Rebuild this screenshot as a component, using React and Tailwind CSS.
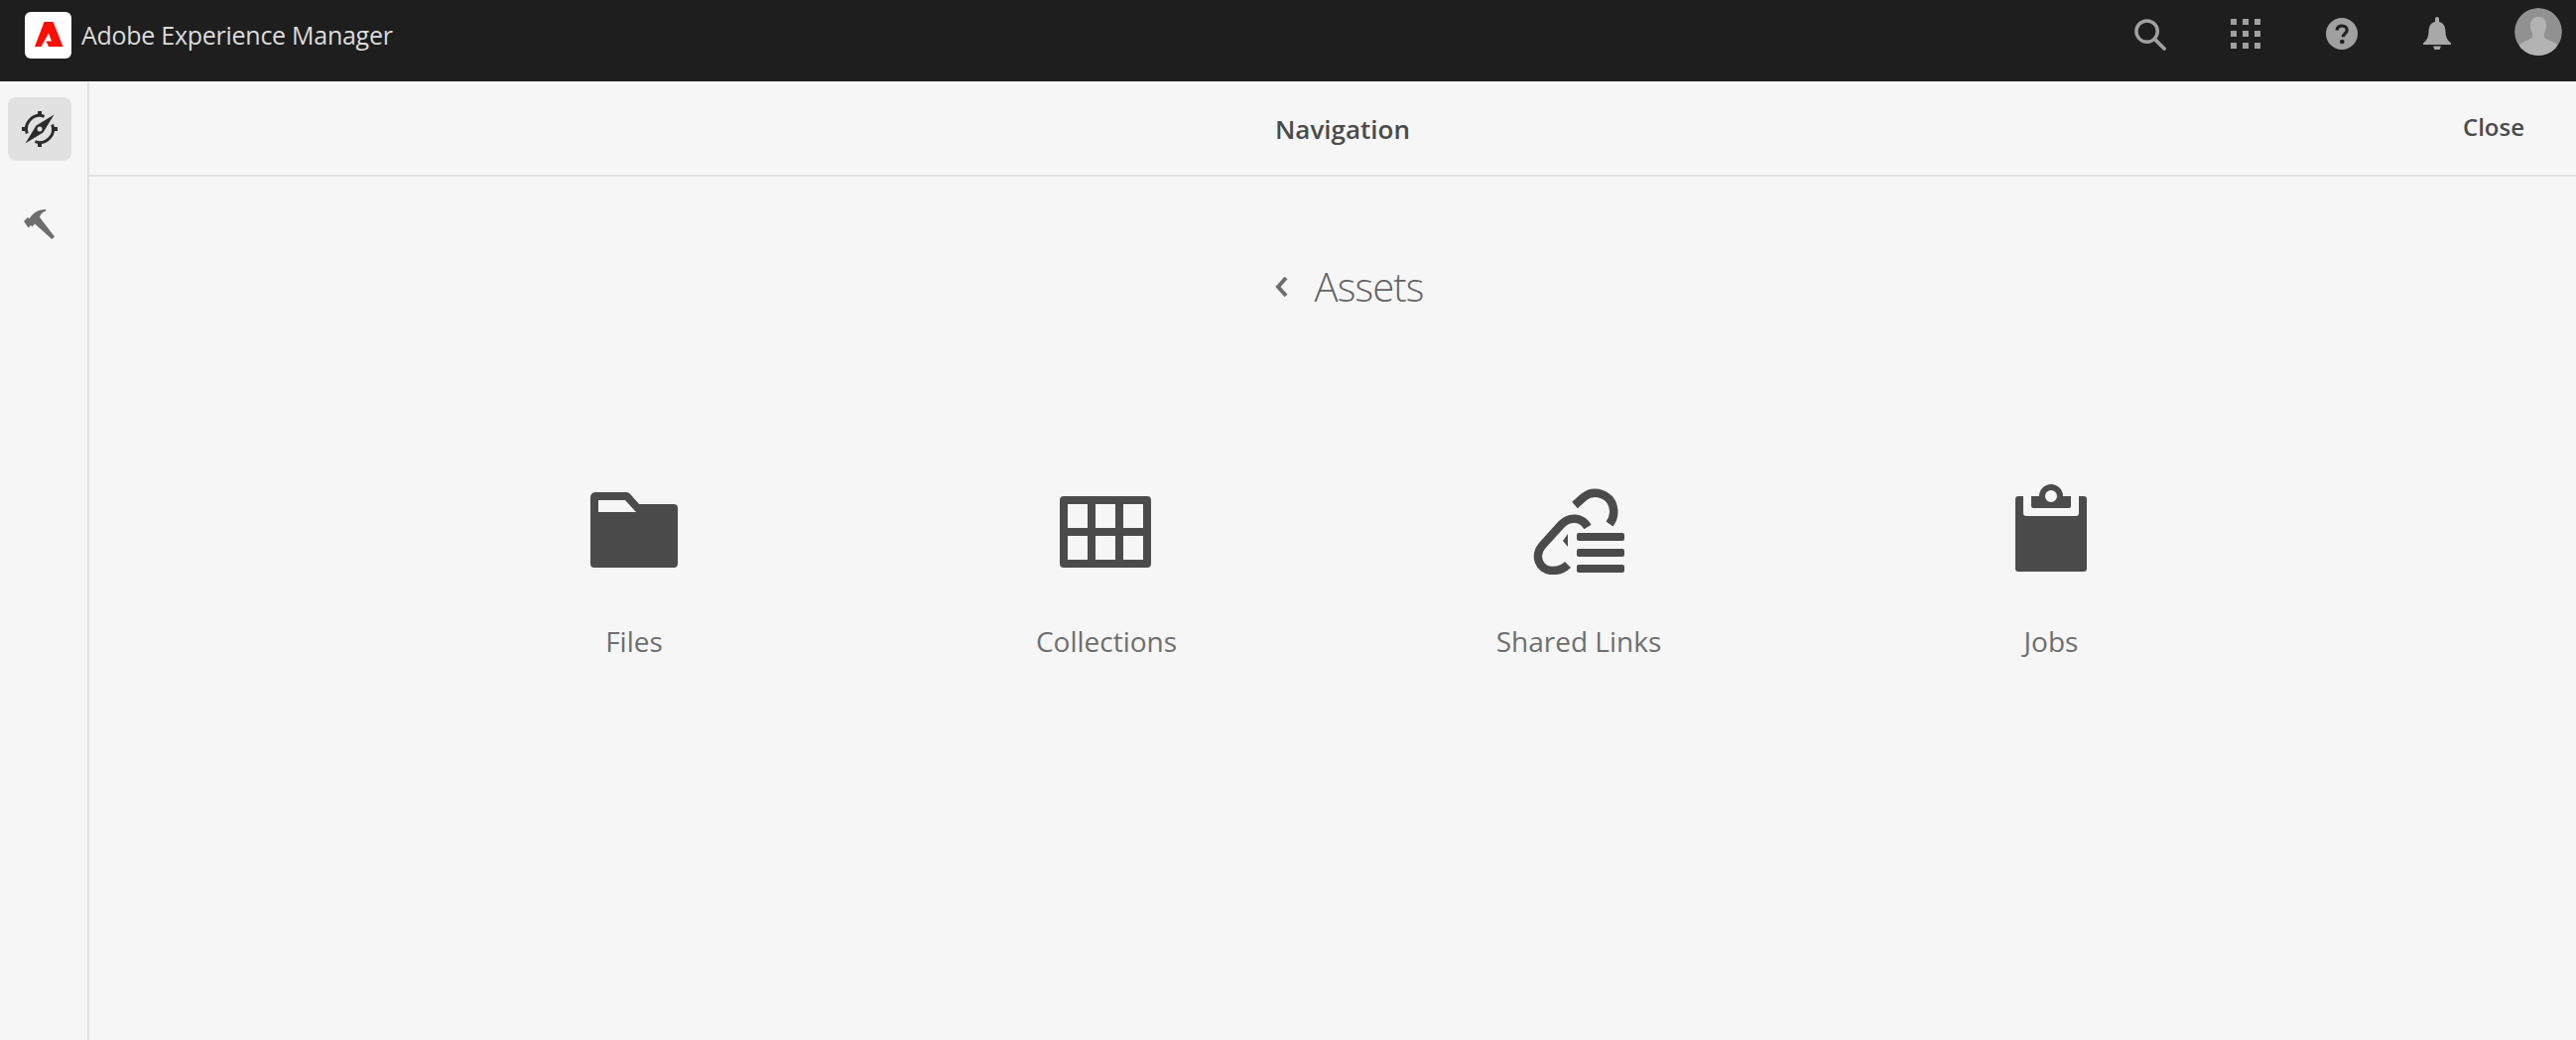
import React from 'react'

function AdobeLogo() {
  return (
    <div className="w-[47px] h-[47px] bg-white rounded-[6px] flex items-center justify-center">
      <svg width="47" height="47" viewBox="0 0 47 47">
        <path fill="#fa0f00" d="M19.500 10H28.500L38.500 35H24L21.500 29.500H27L24 21.500 16.500 35H10z" />
      </svg>
    </div>
  )
}

function SearchIcon() {
  return (
    <svg width="33" height="33" viewBox="0 0 34 34" fill="none" stroke="#a0a0a0">
      <circle cx="14" cy="14" r="11" strokeWidth="3.6" />
      <path d="M22 22l10 10" strokeWidth="3.8" strokeLinecap="round" />
    </svg>
  )
}

function AppsIcon() {
  const cells = [0, 12, 24]
  return (
    <svg width="30" height="30" viewBox="0 0 30 30" fill="#a0a0a0">
      {cells.map((y) => cells.map((x) => <rect key={x + '-' + y} x={x} y={y} width="6" height="6" />))}
    </svg>
  )
}

function HelpIcon() {
  return (
    <svg width="32" height="32" viewBox="0 0 32 32">
      <circle cx="16" cy="16" r="16" fill="#a0a0a0" />
      <path d="M11 12.500c.4-3 2.400-4.500 5.200-4.500 3 0 5 1.700 5 4.200 0 3.600-4 3.700-4 7" fill="none" stroke="#1e1e1e" strokeWidth="3.2" />
      <circle cx="16.300" cy="24" r="2.300" fill="#1e1e1e" />
    </svg>
  )
}

function BellIcon() {
  return (
    <svg width="28" height="34" viewBox="0 0 28 34" fill="#a8a8a8">
      <path d="M12 2a2 2 0 0 1 4 0v3c4.600 1 6.500 5 6.500 10 0 5 2 9 5.500 11.500V28H0v-1.500C3.500 24 5.500 20 5.500 15c0-5 1.900-9 6.500-10z" />
      <path d="M10 29.500h8L16.500 33h-5z" />
    </svg>
  )
}

function Avatar() {
  return (
    <svg width="48" height="48" viewBox="0 0 48 48" className="rounded-full">
      <circle cx="24" cy="24" r="24" fill="#919191" />
      <path fill="#b3b3b3" d="M24 9c5 0 8 3 8 8 0 3-.4 5-1.500 7.500-.8 2-1.300 3.500-.5 5 2 2.500 9 4 13 7.500v12H5V37c4-3.500 11-5 13-7.500.8-1.500.3-3-.5-5C16.400 22 16 20 16 17c0-5 3-8 8-8z" />
    </svg>
  )
}

function CompassIcon() {
  return (
    <svg width="40" height="40" viewBox="0 0 40 40" fill="none">
      <path d="M7.300 24.600A13.500 13.500 0 0 1 24.600 7.300" stroke="#2c2c2c" strokeWidth="3" />
      <path d="M32.700 15.400A13.500 13.500 0 0 1 15.400 32.700" stroke="#2c2c2c" strokeWidth="3" />
      <path fill="#2c2c2c" d="M18 2h4v5h-4zM18 33h4v5h-4zM2 18h5v4H2zM33 18h5v4h-5z" />
      <path fill="#2c2c2c" d="M34.500 5.500L16.500 16.500 5.500 34.500 23.500 23.500z" />
      <circle cx="20" cy="20" r="2.500" fill="#e1e1e1" />
    </svg>
  )
}

function HammerIcon() {
  return (
    <svg width="34" height="32" viewBox="0 0 34 32" fill="#6e6e6e">
      <path d="M1 13l4-4 1.500 1.500C10 5 15 1 23 1l.5 1.500c-3.500 1-6 3.500-6.500 6.500l15 19.500-2.700 2.500L12 15.500l-2.500 3L8 17l-2.500 2.500z" />
    </svg>
  )
}

function FolderIcon() {
  return (
    <svg width="88" height="76" viewBox="0 0 88 76">
      <path
        fill="#4b4b4b"
        fillRule="evenodd"
        d="M5 0h31a5 5 0 0 1 4 1.800L49 12h35a4 4 0 0 1 4 4v56a4 4 0 0 1-4 4H4a4 4 0 0 1-4-4V5a5 5 0 0 1 5-5zM8 8v12h38L35 8z"
      />
    </svg>
  )
}

function CollectionsIcon() {
  return (
    <svg width="92" height="72" viewBox="0 0 92 72">
      <path
        fill="#4b4b4b"
        fillRule="evenodd"
        d="M4 0h84a4 4 0 0 1 4 4v64a4 4 0 0 1-4 4H4a4 4 0 0 1-4-4V4a4 4 0 0 1 4-4zM8 8v24h20V8zM36 8v24h20V8zM64 8v24h20V8zM8 40v24h20V40zM36 40v24h20V40zM64 40v24h20V40z"
      />
    </svg>
  )
}

function SharedLinksIcon() {
  return (
    <svg width="92" height="88" viewBox="27 20 92 88" fill="none">
      <path d="M82 60C76 50 64 49 56 57L36 79C28 88 32 104 47 104 53 104 58 102 62 98" stroke="#4b4b4b" strokeWidth="8.500" />
      <path d="M69 38L78 30C88 22 106 26 108 42 109 48 107 53 104 57" stroke="#4b4b4b" strokeWidth="8.500" />
      <path fill="#4b4b4b" d="M62 67l-5 7 5 6z" />
      <rect x="71" y="66" width="48" height="8" rx="2" fill="#4b4b4b" />
      <rect x="71" y="82" width="48" height="8" rx="2" fill="#4b4b4b" />
      <rect x="71" y="98" width="48" height="8" rx="2" fill="#4b4b4b" />
    </svg>
  )
}

function JobsIcon() {
  return (
    <svg width="72" height="88" viewBox="0 0 72 88">
      <path
        fill="#4b4b4b"
        d="M3 12h5v17a3 3 0 0 0 3 3h50a3 3 0 0 0 3-3V12h5a3 3 0 0 1 3 3v70a3 3 0 0 1-3 3H3a3 3 0 0 1-3-3V15a3 3 0 0 1 3-3z"
      />
      <path
        fill="#4b4b4b"
        fillRule="evenodd"
        d="M24 12a12 12 0 0 1 24 0h8v10a2 2 0 0 1-2 2H18a2 2 0 0 1-2-2V12zM36 6a6 6 0 1 0 0 12 6 6 0 0 0 0-12z"
      />
    </svg>
  )
}

const items = [
  { label: 'Files', icon: <FolderIcon />, box: 'pb-[7px]' },
  { label: 'Collections', icon: <CollectionsIcon />, box: 'pb-[7px] mr-[3px]' },
  { label: 'Shared Links', icon: <SharedLinksIcon />, box: '' },
  { label: 'Jobs', icon: <JobsIcon />, box: 'pb-[3px]' },
]

export default function App() {
  return (
    <div className="w-full h-[1048px] flex flex-col bg-[#f6f6f6] overflow-hidden font-['Open_Sans',sans-serif]">
      <header className="h-[82px] shrink-0 bg-[#1e1e1e] flex items-center pl-[25px] pt-[12px] pb-[23px]">
        <AdobeLogo />
        <span className="ml-[10px] text-[25px] tracking-[-0.27px] text-[#dcdcdc]">Adobe Experience Manager</span>
        <div className="ml-auto flex items-center h-full pb-[3px]">
          <SearchIcon />
          <div className="ml-[65px]"><AppsIcon /></div>
          <div className="ml-[66px]"><HelpIcon /></div>
          <div className="ml-[66px]"><BellIcon /></div>
          <div className="ml-[64px] mr-[14px] mb-[4px]"><Avatar /></div>
        </div>
      </header>

      <div className="flex-1 flex min-h-0">
        <aside className="w-[90px] shrink-0 border-r-2 border-[#e1e1e1] flex flex-col pt-[16px] pl-[8px]">
          <div className="w-[64px] h-[64px] bg-[#e1e1e1] rounded-[8px] flex items-center justify-center">
            <CompassIcon />
          </div>
          <div className="w-[64px] h-[64px] mt-[32px] flex items-center justify-center">
            <HammerIcon />
          </div>
        </aside>

        <main className="flex-1 flex flex-col">
          <div className="h-[96px] shrink-0 border-b-2 border-[#e1e1e1] flex items-center pl-[20px] pt-[3px] relative">
            <h1 className="w-full text-center text-[26px] font-semibold text-[#4b4b4b]">Navigation</h1>
            <button className="absolute right-[52px] top-[28px] text-[24px] font-semibold text-[#4b4b4b]">Close</button>
          </div>

          <div className="pl-[20px]">
            <div className="mt-[86px] h-[50px] flex items-center justify-center">
              <svg width="14" height="22" viewBox="0 0 14 22" fill="none" stroke="#6e6e6e" strokeWidth="4">
                <path d="M12 2L4 11l8 9" />
              </svg>
              <h2 className="ml-[27px] mr-[-12px] text-[40px] font-light tracking-[-0.9px] text-[#646464]">Assets</h2>
            </div>

            <div className="mt-[173px] w-[1904px] mx-auto grid grid-cols-4">
              {items.map((item) => (
                <div key={item.label} className="flex flex-col items-center">
                  <div className={'h-[92px] flex items-end ' + item.box}>{item.icon}</div>
                  <span className="mt-[46px] text-[28px] text-[#6e6e6e]">{item.label}</span>
                </div>
              ))}
            </div>
          </div>
        </main>
      </div>
    </div>
  )
}
